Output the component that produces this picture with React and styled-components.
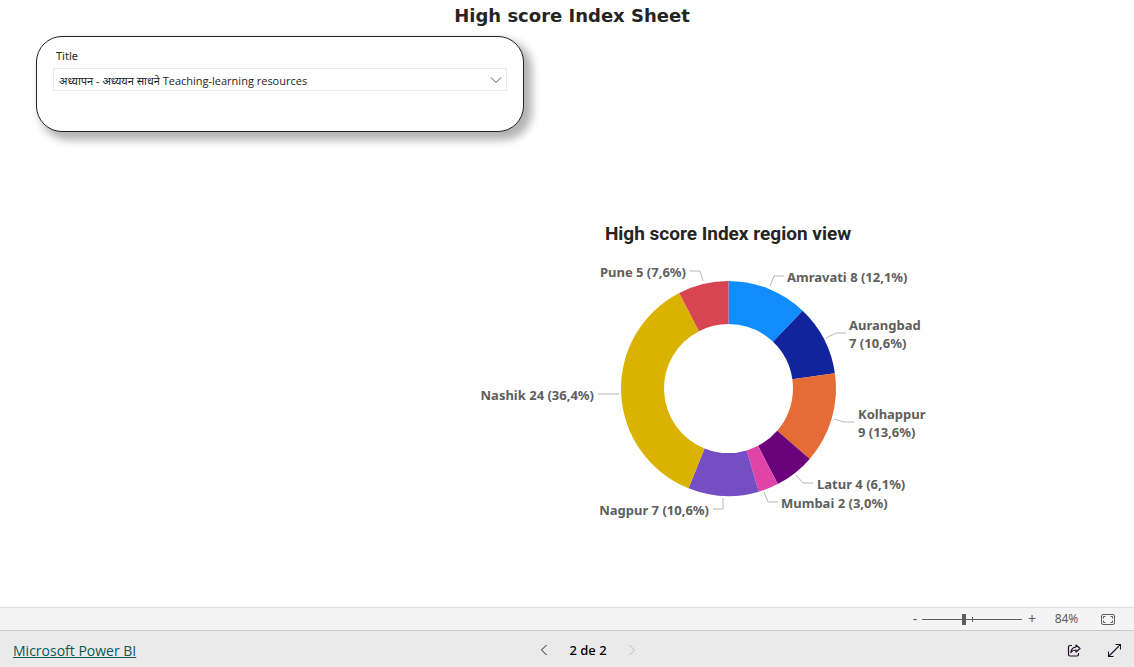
import React, { useState } from "react";
import styled, { createGlobalStyle } from "styled-components";

const UI_FONT = `"Noto Sans", "Open Sans", sans-serif`;

const GlobalStyle = createGlobalStyle`
  *, *::before, *::after { box-sizing: border-box; }
  body { margin: 0; background: #fff; font-family: ${UI_FONT}; color: #252423; }
`;

const Page = styled.div`
  display: flex;
  flex-direction: column;
  min-height: 100vh;
`;

const Report = styled.main`
  flex: 1;
  display: flex;
  flex-direction: column;
`;

const ReportTitle = styled.h1`
  margin: 0;
  padding: 4px 0 8px 10px;
  font: bold 18px/24px "DejaVu Sans", Verdana, sans-serif;
  text-align: center;
`;

const SlicerCard = styled.section`
  width: 43%;
  height: 96px;
  margin-left: 36px;
  padding: 11px 16px;
  border: 1px solid #252423;
  border-radius: 26px;
  background: #fff;
  box-shadow: 6px 6px 8px 2px rgba(0, 0, 0, 0.3);
`;

const SlicerLabel = styled.label`
  display: block;
  padding-left: 3px;
  margin-bottom: 4px;
  font-size: 11px;
  line-height: 16px;
`;

const SelectWrap = styled.div`
  display: grid;
  align-items: center;
  height: 23px;
  border: 1px solid #eaeaea;

  & > * { grid-area: 1 / 1; }
  & > svg { justify-self: end; margin-right: 4px; color: #605e5c; pointer-events: none; }
`;

const Select = styled.select`
  appearance: none;
  width: 100%;
  height: 21px;
  padding: 2px 24px 0 5px;
  border: 0;
  background: transparent;
  color: #252423;
  font: 11px/18px "Open Sans", "Noto Sans", sans-serif;
`;

const ChartPanel = styled.figure`
  margin: 88px 0 0;
  padding-left: calc(50% - 99px);
`;

const ChartTitle = styled.figcaption`
  width: 520px;
  margin-bottom: 12px;
  font: bold 19px/28px Roboto, sans-serif;
  text-align: center;
`;

const Chart = styled.svg`
  display: block;
  overflow: visible;

  text { font: 700 13px ${UI_FONT}; fill: #605e5c; }
  polyline { fill: none; stroke: #b9b7b5; stroke-width: 1; }
`;

const ZoomBar = styled.div`
  display: flex;
  align-items: center;
  justify-content: flex-end;
  height: 24px;
  padding-right: 19px;
  border-top: 1px solid #dedede;
  border-bottom: 1px solid #c8c8c8;
  background: #f4f4f4;
  color: #605e5c;
`;

const IconButton = styled.button`
  display: flex;
  align-items: center;
  justify-content: center;
  width: ${(p) => p.$width || 20}px;
  height: 20px;
  padding: 0;
  border: 0;
  background: none;
  color: ${(p) => p.$color || "inherit"};
  font: 14px/20px ${UI_FONT};
`;

const ZoomSlider = styled.input`
  appearance: none;
  width: 100px;
  height: 12px;
  margin: 0;
  background:
    linear-gradient(#605e5c, #605e5c) 50px 4px / 1px 5px no-repeat,
    linear-gradient(#605e5c, #605e5c) 0 6px / 100% 1px no-repeat;

  &::-webkit-slider-thumb {
    appearance: none;
    width: 4px;
    height: 11px;
    background: #605e5c;
  }
`;

const ZoomValue = styled.output`
  width: 49px;
  margin-right: 10px;
  font-size: 12px;
  line-height: 20px;
  text-align: center;
`;

const Footer = styled.footer`
  display: grid;
  grid-template-columns: 1fr auto 1fr;
  align-items: center;
  height: 36px;
  padding: 2px 10px 0 13px;
  background: #eaeaea;
`;

const BrandLink = styled.a`
  justify-self: start;
  padding-top: 2px;
  color: #0b5a50;
  font: 14px/20px "Open Sans", "Noto Sans", sans-serif;
`;

const Pager = styled.nav`
  display: flex;
  align-items: center;
  padding-left: 39px;
`;

const PageCount = styled.span`
  width: 68px;
  color: #000;
  font-size: 13px;
  font-weight: 500;
  line-height: 20px;
  text-align: center;
`;

const Actions = styled.div`
  display: flex;
  justify-content: flex-end;
  gap: 20px;
`;

const CENTER = { x: 260.5, y: 128.5 };
const OUTER = 107.5;
const INNER = 64.5;

const REGIONS = [
  { name: "Amravati", value: 8, color: "#118dff", leader: "302,26 306,16 316,16", at: [319, 22], lines: ["Amravati 8 (12,1%)"] },
  { name: "Aurangbad", value: 7, color: "#12239e", leader: "358,78 368,73 378,73", at: [381, 70], lines: ["Aurangbad", "7 (10,6%)"] },
  { name: "Kolhappur", value: 9, color: "#e66c37", leader: "366,159 376,162 386,162", at: [390, 159], lines: ["Kolhappur", "9 (13,6%)"] },
  { name: "Latur", value: 4, color: "#6b007b", leader: "328,215 335,223 345,223", at: [349, 229], lines: ["Latur 4 (6,1%)"] },
  { name: "Mumbai", value: 2, color: "#e044a7", leader: "296,232 300,242 310,242", at: [313, 248], lines: ["Mumbai 2 (3,0%)"] },
  { name: "Nagpur", value: 7, color: "#744ec2", leader: "255,238 255,249 245,249", at: [241, 255], lines: ["Nagpur 7 (10,6%)"], end: true },
  { name: "Nashik", value: 24, color: "#d9b300", leader: "151,134 141,134 130,134", at: [126, 140], lines: ["Nashik 24 (36,4%)"], end: true },
  { name: "Pune", value: 5, color: "#d64550", leader: "235,21 232,11 222,11", at: [218, 17], lines: ["Pune 5 (7,6%)"], end: true },
];

const point = (radius, turn) => {
  const a = turn * 2 * Math.PI;
  return `${CENTER.x + radius * Math.sin(a)} ${CENTER.y - radius * Math.cos(a)}`;
};

const ringSlice = (from, to) =>
  `M${point(OUTER, from)} A${OUTER} ${OUTER} 0 0 1 ${point(OUTER, to)} ` +
  `L${point(INNER, to)} A${INNER} ${INNER} 0 0 0 ${point(INNER, from)} Z`;

function DonutChart() {
  const total = REGIONS.reduce((sum, r) => sum + r.value, 0);
  let sum = 0;
  return (
    <Chart width="520" height="270" role="img" aria-label="High score Index region view">
      {REGIONS.map((r) => {
        const from = sum / total;
        sum += r.value;
        return (
          <g key={r.name}>
            <path d={ringSlice(from, sum / total)} fill={r.color} />
            <polyline points={r.leader} />
            <text textAnchor={r.end ? "end" : "start"}>
              {r.lines.map((line, i) => (
                <tspan key={line} x={r.at[0]} y={r.at[1] + i * 18}>{line}</tspan>
              ))}
            </text>
          </g>
        );
      })}
    </Chart>
  );
}

const Chevron = ({ d, width, height }) => (
  <svg width={width} height={height} viewBox={`0 0 ${width} ${height}`} fill="none" stroke="currentColor" strokeWidth="1">
    <path d={d} />
  </svg>
);

export default function App() {
  const [zoom, setZoom] = useState(42);
  return (
    <Page>
      <GlobalStyle />
      <Report>
        <ReportTitle>High score Index Sheet</ReportTitle>
        <SlicerCard>
          <SlicerLabel htmlFor="title-filter">Title</SlicerLabel>
          <SelectWrap>
            <Select id="title-filter">
              <option>अध्यापन - अध्ययन साधने Teaching-learning resources</option>
            </Select>
            <Chevron width={12} height={8} d="M1 1.5 L6 6.5 L11 1.5" />
          </SelectWrap>
        </SlicerCard>
        <ChartPanel>
          <ChartTitle>High score Index region view</ChartTitle>
          <DonutChart />
        </ChartPanel>
      </Report>
      <ZoomBar>
        <IconButton $width={14} aria-label="Zoom out">-</IconButton>
        <ZoomSlider
          type="range"
          min="0"
          max="100"
          value={zoom}
          aria-label="Zoom"
          onChange={(e) => setZoom(Number(e.target.value))}
        />
        <IconButton aria-label="Zoom in">+</IconButton>
        <ZoomValue>84%</ZoomValue>
        <IconButton $width={14} aria-label="Fit to page">
          <svg width="14" height="11" viewBox="0 0 14 11" fill="none" stroke="currentColor">
            <rect x="0.5" y="0.5" width="13" height="10" rx="1.5" />
            <path d="M2.5 4.5v-2h2 M9.5 2.5h2v2 M11.5 6.5v2h-2 M4.5 8.5h-2v-2" />
          </svg>
        </IconButton>
      </ZoomBar>
      <Footer>
        <BrandLink href="#powerbi">Microsoft Power BI</BrandLink>
        <Pager aria-label="Pages">
          <IconButton aria-label="Previous page" $color="#252423">
            <Chevron width={8} height={12} d="M6.5 1 L1.5 6 L6.5 11" />
          </IconButton>
          <PageCount>2 de 2</PageCount>
          <IconButton aria-label="Next page" $color="#bdbdbd" disabled>
            <Chevron width={8} height={12} d="M1.5 1 L6.5 6 L1.5 11" />
          </IconButton>
        </Pager>
        <Actions>
          <IconButton aria-label="Share" $color="#1b0d2b">
            <svg width="14" height="13" viewBox="0 0 14 13" fill="none" stroke="currentColor" strokeWidth="1.2" strokeLinejoin="round">
              <path d="M5 1.5H3a1.5 1.5 0 0 0-1.500 1.500v7.500a1.500 1.500 0 0 0 1.500 1.500h7a1.500 1.500 0 0 0 1.500-1.500V9" />
              <path d="M9 1 L13 4.500 L9 8 V6 C6.500 6 5 6.800 3.800 8.500 C4.200 5.500 6 3.300 9 3 Z" />
            </svg>
          </IconButton>
          <IconButton aria-label="Full screen" $color="#1b0d2b">
            <svg width="13" height="13" viewBox="0 0 13 13" fill="none" stroke="currentColor" strokeWidth="1.1">
              <path d="M1 12 L12 1 M7.500 0.500 H12.500 V5.500 M0.500 7.500 V12.500 H5.500" />
            </svg>
          </IconButton>
        </Actions>
      </Footer>
    </Page>
  );
}
